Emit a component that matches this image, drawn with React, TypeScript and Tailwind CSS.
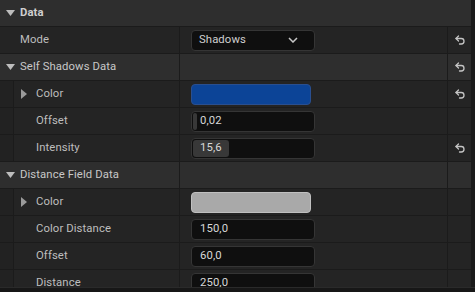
import React from "react";

const Undo = () => (
  <svg width="12" height="12" viewBox="0 0 24 24" fill="none" stroke="#c4c4c4" strokeWidth="2.6" strokeLinecap="round" strokeLinejoin="round">
    <path d="M9 14 4 9l5-5" />
    <path d="M4 9h10.5a5.5 5.5 0 0 1 5.5 5.5 5.5 5.5 0 0 1-5.5 5.5H11" />
  </svg>
);

const Down = () => (
  <svg width="9" height="6" viewBox="0 0 9 6"><path d="M0 0h9L4.5 6z" fill="#bdbdbd" /></svg>
);
const Right = () => (
  <svg width="6" height="10" viewBox="0 0 6 10"><path d="M0 0l6 5-6 5z" fill="#9a9a9a" /></svg>
);

type RowProps = {
  label: string;
  header?: boolean;
  sub?: boolean;
  expander?: boolean;
  value?: React.ReactNode;
  reset?: boolean;
};

const Row = ({ label, header, sub, expander, value, reset }: RowProps) => (
  <div className={`flex h-[27px] shrink-0 border-b border-[#1b1b1b] ${header ? "bg-[#2e2e2e]" : "bg-[#242424]"}`}>
    <div className="flex w-[180px] shrink-0 items-center border-r border-[#1b1b1b]">
      {sub && <div className="h-full w-[14px] shrink-0 border-r border-[#1b1b1b] bg-[#222222]" />}
      {header ? (
        <div className="flex w-[20px] shrink-0 items-center justify-center pl-[1px]"><Down /></div>
      ) : sub ? (
        <div className="flex w-[22px] shrink-0 items-center pl-[7px]">{expander && <Right />}</div>
      ) : (
        <div className="w-[20px] shrink-0" />
      )}
      <span className={`text-[11.3px] tracking-[0.1px] ${header ? "text-[#c8c8c8]" : "text-[#bebebe]"}`}>{label}</span>
    </div>
    <div className="flex w-[268px] shrink-0 items-center border-r border-[#1b1b1b] pl-[11px]">{value}</div>
    <div className="flex w-[23px] shrink-0 items-center justify-center">{reset && <Undo />}</div>
  </div>
);

const Num = ({ v, fill }: { v: string; fill?: number }) => (
  <div className="relative flex h-[21px] w-[124px] items-center rounded-[4px] border border-[#353535] bg-[#0f0f0f]">
    {fill !== undefined && (
      <div className="absolute left-[1px] top-[1px] h-[17px] rounded-[3px] bg-[#383838]" style={{ width: fill }} />
    )}
    <span className="relative pl-[8px] text-[11.3px] tracking-[0.1px] text-[#d8d8d8]">{v}</span>
  </div>
);

export default function App() {
  return (
    <div className="flex h-[292px] w-[475px] flex-col overflow-hidden bg-[#1a1a1a]" style={{ fontFamily: "Roboto, 'Noto Sans', sans-serif" }}>
      <div className="flex flex-1 overflow-hidden">
        <div className="flex w-[471px] flex-col">
          <div className="flex h-[27px] shrink-0 items-center border-b border-[#1b1b1b] bg-[#2e2e2e]">
            <div className="flex w-[20px] items-center justify-center pl-[1px]"><Down /></div>
            <span className="text-[11.3px] font-bold tracking-[0.1px] text-[#cfcfcf]">Data</span>
          </div>
          <Row
            label="Mode"
            reset
            value={
              <div className="flex h-[21px] w-[124px] items-center justify-between rounded-[4px] border border-[#353535] bg-[#0f0f0f] pl-[7px] pr-[16px]">
                <span className="text-[11.3px] tracking-[0.1px] text-[#d0d0d0]">Shadows</span>
                <svg width="10" height="6" viewBox="0 0 10 6" fill="none" stroke="#c8c8c8" strokeWidth="1.5"><path d="M1 1l4 4 4-4" /></svg>
              </div>
            }
          />
          <Row label="Self Shadows Data" header reset />
          <Row label="Color" sub expander reset value={<div className="h-[21px] w-[120px] rounded-[4px] border border-[#2a4f8f] bg-[#0c4497]" />} />
          <Row label="Offset" sub value={<Num v="0,02" fill={4} />} />
          <Row label="Intensity" sub reset value={<Num v="15,6" fill={36} />} />
          <Row label="Distance Field Data" header />
          <Row label="Color" sub expander value={<div className="h-[21px] w-[120px] rounded-[4px] border border-[#c0c0c0] bg-[#a9a9a9]" />} />
          <Row label="Color Distance" sub value={<Num v="150,0" />} />
          <Row label="Offset" sub value={<Num v="60,0" />} />
          <Row label="Distance" sub value={<Num v="250,0" />} />
        </div>
        <div className="w-[4px] bg-[#1a1a1a]" />
      </div>
      <div className="h-[5px] shrink-0 border-t border-[#2a2a2a] bg-[#171717]" />
    </div>
  );
}
